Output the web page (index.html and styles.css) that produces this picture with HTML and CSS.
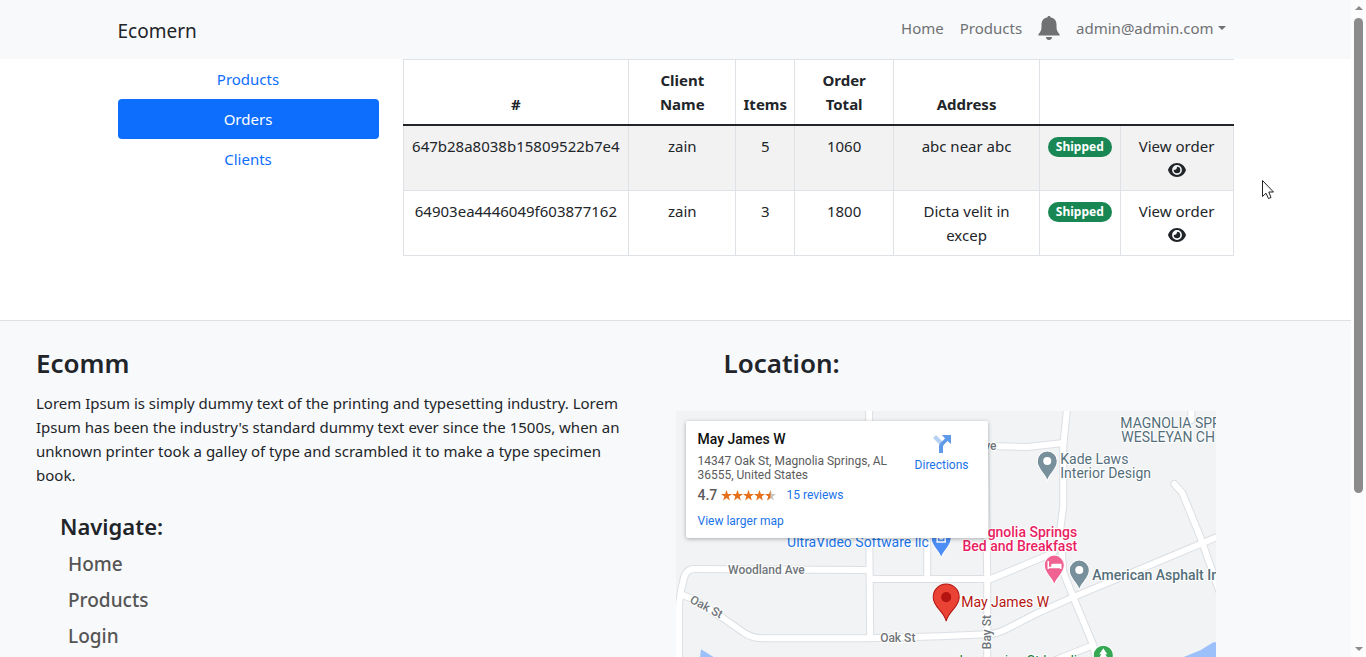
FILE: index.html
```html
<!DOCTYPE html>
<html lang="en">
<head>
<meta charset="utf-8">
<title>Ecomern</title>
<link rel="stylesheet" href="styles.css">
</head>
<body>
<div class="window">
<div class="page">
  <header class="navbar">
    <div class="container navbar-inner">
      <a class="brand" href="#">Ecomern</a>
      <nav class="nav">
        <a href="#">Home</a>
        <a href="#">Products</a>
        <a href="#" aria-label="Notifications"><svg class="bell" viewBox="0 0 22 24"><path d="M11 0c-1 0-1.700.7-1.700 1.600C5.500 2.200 3.500 5 3.500 8.500v2.500c0 2.500-.6 4.500-3 7.200-.5.700-.2 1.300.6 1.300h19.800c.8 0 1.100-.6.6-1.300C19.100 15.500 18.500 13.500 18.500 11V8.500c0-3.500-2-6.300-5.800-6.900C12.700.7 12 0 11 0zM8 21h6c0 1.700-1.300 3-3 3s-3-1.300-3-3z"/></svg></a>
        <a class="account" href="#">admin@admin.com<span class="caret"></span></a>
      </nav>
    </div>
  </header>

  <main class="container main">
    <nav class="tabs">
      <a href="#">Products</a>
      <a class="active" href="#">Orders</a>
      <a href="#">Clients</a>
    </nav>
    <table class="orders">
      <colgroup><col class="c-id"><col class="c-name"><col class="c-items"><col class="c-total"><col class="c-address"><col class="c-status"><col class="c-view"></colgroup>
      <thead>
        <tr><th>#</th><th>Client<br>Name</th><th>Items</th><th>Order<br>Total</th><th>Address</th><th colspan="2" class="blank"></th></tr>
      </thead>
      <tbody>
        <tr><td>647b28a8038b15809522b7e4</td><td>zain</td><td>5</td><td>1060</td><td>abc near abc</td><td><span class="badge">Shipped</span></td>
          <td>View order <svg class="eye" viewBox="0 0 18 14"><path fill-rule="evenodd" d="M9 0C4.500 0 1.300 3.200 0 7c1.300 3.800 4.500 7 9 7s7.700-3.200 9-7C16.700 3.200 13.500 0 9 0zm0 2.100a4.900 4.900 0 1 1 0 9.800 4.900 4.900 0 0 1 0-9.800zM9 3.700c0 2.200-1.100 3.300-3.300 3.300a3.300 3.300 0 1 0 3.300-3.300z"/></svg></td></tr>
        <tr><td>64903ea4446049f603877162</td><td>zain</td><td>3</td><td>1800</td><td>Dicta velit in<br>excep</td><td><span class="badge">Shipped</span></td>
          <td>View order <svg class="eye" viewBox="0 0 18 14"><path fill-rule="evenodd" d="M9 0C4.500 0 1.300 3.200 0 7c1.300 3.800 4.500 7 9 7s7.700-3.200 9-7C16.700 3.200 13.500 0 9 0zm0 2.100a4.900 4.900 0 1 1 0 9.800 4.900 4.900 0 0 1 0-9.800zM9 3.700c0 2.200-1.100 3.300-3.300 3.300a3.300 3.300 0 1 0 3.300-3.300z"/></svg></td></tr>
      </tbody>
    </table>
  </main>

  <footer class="footer">
    <section class="about">
      <h3>Ecomm</h3>
      <p>Lorem Ipsum is simply dummy text of the printing and typesetting industry. Lorem Ipsum has been the industry's standard dummy text ever since the 1500s, when an unknown printer took a galley of type and scrambled it to make a type specimen book.</p>
      <div class="navigate">
        <h4>Navigate:</h4>
        <ul>
          <li><a href="#">Home</a></li>
          <li><a href="#">Products</a></li>
          <li><a href="#">Login</a></li>
        </ul>
      </div>
    </section>
    <section class="location">
      <h3>Location:</h3>
      <div class="map">
        <svg class="map-canvas" viewBox="0 0 540 300">
          <defs>
            <g id="roads" fill="none" stroke-linejoin="round" stroke-linecap="round">
              <path d="M193-5V110L194 226"/>
              <path d="M3 305V197C3 187 5 179 7 171Q9 158 18 158L192 159"/>
              <path d="M195 168H314L377 142L385 120"/>
              <path d="M251 100V167"/>
              <path d="M300 35L313 35L351 36L387 32"/>
              <path d="M391-5L387 35L387 95L384 118L387 161L397 186L417 234L430 300M417 234L384 247L350 262"/>
              <path d="M309 36L311 167V300"/>
              <path d="M7 184L17 188L47 207L67 221Q76 227 86 227L191 227L264 225L311 223Q320 223 330 218L361 202L397 186L550 122"/>
              <path d="M498 73L506 82L524 126L545 186"/>
              <path d="M515-5V9"/>
            </g>
            <path id="pin" d="M0 15C-2 7-10 4-10-5A10 10 0 0 1 10-5C10 4 2 7 0 15z"/>
          </defs>
          <rect width="540" height="300" fill="#f1f3f4"/>
          <path d="M25 238L44 250L70 290H10L24 246zM507 246L524 239L537 231H540V300H490z" fill="#9cc0f9"/>
          <use href="#roads" stroke="#dcdfe3" stroke-width="8"/>
          <use href="#roads" stroke="#fff" stroke-width="6"/>
          <g class="street">
            <text x="52" y="163">Woodland Ave</text>
            <text x="204" y="231">Oak St</text>
            <text transform="translate(13 191) rotate(28)">Oak St</text>
            <text transform="translate(315 238) rotate(-90)">Bay St</text>
            <text x="308" y="39">ve</text>
          </g>
          <g class="place">
            <text x="444" y="17">MAGNOLIA SPR</text>
            <text x="445" y="31">WESLEYAN CH</text>
            <text x="384" y="53">Kade Laws</text>
            <text x="384" y="67">Interior Design</text>
            <text class="strong" x="416" y="169">American Asphalt In</text>
            <text class="blue" x="111" y="136">UltraVideo Software llc</text>
            <text class="pink" x="401" y="126">Magnolia Springs</text>
            <text class="pink" x="401" y="140">Bed and Breakfast</text>
            <text class="red" x="285" y="196">May James W</text>
            <text class="green" x="279" y="255">Jessamine St Landing</text>
          </g>
          <g stroke="#fff" stroke-width="1">
            <use href="#pin" x="371" y="55" fill="#78909c"/>
            <use href="#pin" x="403" y="164" fill="#78909c"/>
            <use href="#pin" x="378" y="159" fill="#f06292"/>
            <use href="#pin" x="265" y="132" fill="#4c8df6"/>
            <use href="#pin" x="427" y="249" fill="#34a853"/>
          </g>
          <circle cx="371" cy="50" r="4" fill="#fff"/>
          <circle cx="403" cy="159" r="4" fill="#fff"/>
          <path d="M372 150V158M372 156.500H384.500M384.500 158V153.500H376" fill="none" stroke="#fff" stroke-width="1.500"/>
          <path d="M375 153h9v3h-9z" fill="#fff"/>
          <path d="M261 125V131H269V125M263 127Q265 129 267 127" fill="none" stroke="#fff" stroke-width="1.500"/>
          <path d="M427 237l4 6h-2l3 5h-4v3h-2v-3h-4l3-5h-2z" fill="#fff"/>
          <path d="M270 210C268 200 257 196 257 186A13 13 0 0 1 283 186C283 196 272 200 270 210z" fill="#ea4335" stroke="#b31412" stroke-width="1"/>
          <circle cx="270" cy="186" r="5" fill="#b31412"/>
        </svg>
        <div class="card">
          <div class="card-info">
            <strong>May James W</strong>
            <p>14347 Oak St, Magnolia Springs, AL 36555, United States</p>
            <div class="rating">
              <b>4.7</b>
              <svg class="stars" viewBox="0 0 55 11" role="img" aria-label="4.7 stars">
                <defs><path id="star" d="M5.500 0L6.900 4H11L7.700 6.500 8.900 10.500 5.500 8.100 2.100 10.500 3.300 6.500 0 4H4.100z"/></defs>
                <g fill="#e7711b"><use href="#star"/><use href="#star" x="11"/><use href="#star" x="22"/><use href="#star" x="33"/></g>
                <use href="#star" x="44" fill="#c6c6c6"/>
                <path d="M49.500 0V8.100L46.100 10.500 47.300 6.500 44 4H48.100z" fill="#e7711b"/>
              </svg>
              <a href="#">15 reviews</a>
            </div>
            <a href="#">View larger map</a>
          </div>
          <a class="directions" href="#">
            <svg viewBox="0 0 18 18"><path d="M0 3L3 0 10 7 8 11z" fill="#b5d1f5"/><path d="M6 18V11Q6 9 8 7.500L12 3.500 9 0H18V9L14.500 6 11 9.500Q10 10.500 10 12V18z" fill="#5f9ae8"/></svg>
            Directions
          </a>
        </div>
      </div>
    </section>
  </footer>
</div>
<div class="scrollbar" aria-hidden="true">
  <span class="arrow up"></span>
  <span class="track"><span class="thumb"></span></span>
  <span class="arrow down"></span>
</div>
</div>
<svg class="pointer" viewBox="0 0 12 20"><path d="M.5.5V16.500L4 13.200 6.500 18.500 9 17.500 6.800 12H11.500z" fill="#fff" stroke="#222" stroke-width="1"/></svg>
</body>
</html>
```
FILE: styles.css
```css
* { box-sizing: border-box; }
body {
  margin: 0;
  font: 15px/24px "Noto Sans", "Open Sans", sans-serif;
  color: #212529;
  background: #fff;
}
a { color: #0d6efd; text-decoration: none; }
h3, h4, p, ul { margin: 0; padding: 0; }
h3, h4 { font-weight: 600; }

.window { display: flex; height: 100vh; overflow: hidden; }
.page { flex: 1; min-width: 0; overflow: hidden; }
.container { width: 100%; max-width: 1140px; margin: 0 auto; padding: 0 12px; }

.navbar { background: #f8f9fb; }
.navbar-inner { display: flex; justify-content: space-between; align-items: center; height: 59px; }
.brand { font-size: 19px; line-height: 30px; padding-top: 2px; color: #212529; }
.nav { display: flex; align-items: center; padding-bottom: 3px; }
.nav a { display: flex; align-items: center; padding: 0 8px; color: #6f7173; }
.bell { width: 22px; height: 24px; fill: #6f7173; }
.caret { margin-left: 4px; border: 4px solid transparent; border-top-color: #6f7173; border-bottom: 0; }

.main { display: grid; grid-template-columns: 261px 1fr; gap: 24px; align-items: start; padding-bottom: 64px; }
.tabs { display: flex; flex-direction: column; text-align: center; }
.tabs a { padding: 8px; border-radius: 4px; }
.tabs .active { background: #0d6efd; color: #fff; }

.orders { width: 100%; table-layout: fixed; border-collapse: collapse; text-align: center; }
.c-id { width: 27.200%; }
.c-name { width: 12.900%; }
.c-items { width: 7.100%; }
.c-total { width: 11.900%; }
.c-address { width: 17.600%; }
.c-status { width: 9.700%; }
.c-view { width: 13.600%; }
.orders th, .orders td { border: 1px solid #dee2e6; padding: 8px 0; vertical-align: top; }
.orders th { vertical-align: bottom; border-bottom: 2px solid #212529; }
.orders .blank { border-right-color: transparent; }
.orders tbody tr:nth-child(odd) { background: #f2f2f2; }
.badge { display: block; width: fit-content; margin: 3px auto 0; padding: 0 8px; border-radius: 10px; background: #198754; color: #fff; font-size: 12px; font-weight: 700; line-height: 20px; }
.eye { display: block; width: 18px; height: 14px; margin: 5px auto; fill: #212529; }

.footer { display: grid; grid-template-columns: 1fr 1fr; background: #f8f9fb; border-top: 1px solid #dee2e6; padding-top: 24px; }
.footer h3 { font-size: 26px; line-height: 36px; }
.about { padding: 0 40px 0 36px; }
.about p { margin-top: 10px; }
.navigate { padding: 24px 24px 0; }
.navigate h4 { font-size: 22px; line-height: 30px; margin-bottom: 5px; }
.navigate ul { list-style: none; padding-left: 8px; }
.navigate a { display: block; font-size: 19px; font-weight: 500; line-height: 36px; color: #555; }
.location h3 { padding-left: 48px; }
.map { position: relative; width: 80%; margin-top: 30px; font-family: Roboto, sans-serif; }
.map-canvas { display: block; width: 100%; }
.map-canvas text { stroke: #fff; stroke-width: 2px; paint-order: stroke; }
.street { font-size: 12px; font-weight: 500; fill: #70757a; }
.place { font-size: 14px; fill: #546e7a; }
.strong { font-weight: 500; }
.blue { fill: #1a73e8; }
.pink { fill: #e91e63; font-weight: 500; text-anchor: end; }
.red { fill: #b31412; }
.green { fill: #188038; }
.card { position: absolute; top: 10px; left: 10px; display: flex; justify-content: space-between; width: 302px; height: 117px; padding: 10px 19px 0 12px; background: #fff; border-radius: 2px; box-shadow: 0 1px 4px rgba(0, 0, 0, .3); font-size: 12px; line-height: 14px; }
.card a { color: #1a73e8; }
.card strong { display: block; font-size: 14px; font-weight: 500; line-height: 16px; color: #111; }
.card .card-info { width: 196px; }
.card p { margin-top: 7px; color: #5b5b5b; }
.rating { display: flex; align-items: center; margin: 6px 0 12px; }
.rating b { width: 23px; font-size: 14px; font-weight: 500; color: #5b5b5b; }
.stars { width: 55px; height: 11px; margin-right: 11px; }
.directions { display: flex; flex-direction: column; align-items: center; gap: 5px; padding-top: 4px; }
.directions svg { width: 18px; height: 18px; }

.scrollbar { display: flex; flex-direction: column; align-items: center; width: 15px; padding: 6px 0; background: #fcfcfc; }
.arrow { border: 4px solid transparent; }
.up { border-top: 0; border-bottom-color: #8b8b8b; }
.down { border-bottom: 0; border-top-color: #8b8b8b; }
.track { flex: 1; width: 9px; padding: 8px 0 4px; }
.thumb { display: block; height: 76%; border-radius: 5px; background: #8b8b8b; }
.pointer { position: absolute; left: 1262px; top: 180px; width: 12px; height: 20px; }
```
